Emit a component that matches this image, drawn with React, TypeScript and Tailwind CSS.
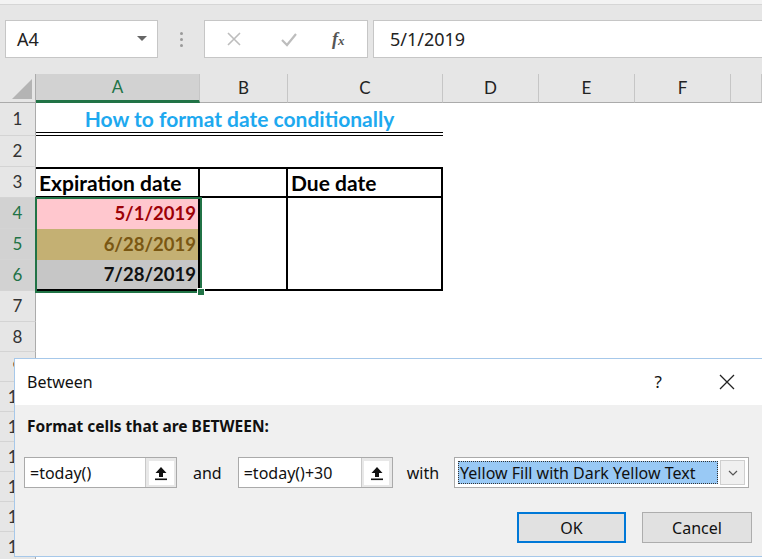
import React from 'react';

const sheetFont = { fontFamily: 'Lato, "Liberation Sans", sans-serif' };

function ColHead({ label, active }: { label: string; active?: boolean }) {
  return (
    <div
      className={`flex items-center justify-center border-r border-[#c6c6c6] text-[17px] ${
        active ? 'bg-[#d2d2d2] text-[#217346] border-b-[3px] border-b-[#217346]' : 'bg-[#e6e6e6] text-[#222] border-b border-b-[#ababab]'
      }`}
    >
      {label}
    </div>
  );
}

function RowHead({ n, active }: { n: number; active?: boolean }) {
  return (
    <div
      className={`flex items-center justify-center border-r border-b border-r-[#ababab] border-b-[#d4d4d4] text-[17px] ${
        active ? 'bg-[#d2d2d2] text-[#217346]' : 'bg-[#e6e6e6] text-[#333]'
      }`}
    >
      {n}
    </div>
  );
}

function Empty({ n }: { n: number }) {
  return (
    <>
      {Array.from({ length: n }).map((_, i) => (
        <div key={i} />
      ))}
    </>
  );
}

function RefButton() {
  return (
    <div className="w-[31px] h-full border-l border-[#c8c8c8] bg-[#e8e8e8] flex items-center justify-center">
      <div className="w-[25px] h-[24px] bg-white flex items-center justify-center">
        <svg width="14" height="16" viewBox="0 0 14 16">
          <path d="M7 2 L12.5 8 H9 V12 H5 V8 H1.5 Z" fill="#111" />
          <rect x="1" y="13.5" width="12" height="1.6" fill="#111" />
        </svg>
      </div>
    </div>
  );
}

export default function App() {
  return (
    <div className="w-[762px] h-[559px] relative overflow-hidden bg-white" style={sheetFont}>
      {/* formula bar */}
      <div className="h-[74px] bg-[#e6e6e6] border-t-[4px] border-t-[#f3f3f3] relative" style={{ fontFamily: '"Noto Sans", sans-serif' }}>
        <div className="h-px bg-[#d6d6d6]" />
        <div className="flex items-start pt-[15px]">
          <div className="ml-[5px] w-[153px] h-[38px] bg-white border border-[#c6c6c6] flex items-center pl-[11px] pr-[10px]">
            <span className="text-[18px] text-[#222]">A4</span>
            <svg className="ml-auto" width="10" height="6" viewBox="0 0 10 6">
              <path d="M0 0 H10 L5 5 Z" fill="#666" />
            </svg>
          </div>
          <div className="w-[46px] h-[38px] flex flex-col items-center justify-center gap-[3px]">
            <span className="w-[3px] h-[3px] bg-[#9a9a9a] rounded-full" />
            <span className="w-[3px] h-[3px] bg-[#9a9a9a] rounded-full" />
            <span className="w-[3px] h-[3px] bg-[#9a9a9a] rounded-full" />
          </div>
          <div className="w-[164px] h-[38px] bg-white border border-[#c6c6c6] flex items-center">
            <svg className="ml-[21px]" width="16" height="16" viewBox="0 0 16 16">
              <path d="M2 2 L14 14 M14 2 L2 14" stroke="#bdbdbd" strokeWidth="1.6" fill="none" />
            </svg>
            <svg className="ml-[38px]" width="18" height="16" viewBox="0 0 18 16">
              <path d="M2 9 L7 14 L16 3" stroke="#bdbdbd" strokeWidth="2.2" fill="none" />
            </svg>
            <span
              className="ml-[34px] text-[18px] italic font-bold text-[#555]"
              style={{ fontFamily: '"Liberation Serif", serif' }}
            >
              f<span className="text-[13px]">x</span>
            </span>
          </div>
          <div className="ml-[5px] flex-1 h-[38px] bg-white border border-[#c6c6c6] border-r-0 flex items-center pl-[16px]">
            <span className="text-[18px] text-[#222]">5/1/2019</span>
          </div>
        </div>
      </div>

      {/* sheet grid */}
      <div className="relative grid grid-cols-[36px_164px_88px_155px_96px_96px_96px_31px] grid-rows-[29px_33px_31px_31px_31px_31px_31px_31px_30px_30px_30px_30px_30px_30px_30px_30px]">
        {/* header row */}
        <div className="bg-[#e6e6e6] border-r border-b border-[#ababab] flex items-end justify-end p-[3px]">
          <svg width="20" height="20" viewBox="0 0 20 20">
            <path d="M20 0 L20 20 L0 20 Z" fill="#b4b4b4" />
          </svg>
        </div>
        <ColHead label="A" active />
        <ColHead label="B" />
        <ColHead label="C" />
        <ColHead label="D" />
        <ColHead label="E" />
        <ColHead label="F" />
        <ColHead label="" />

        {/* row 1 */}
        <RowHead n={1} />
        <div className="col-span-3 border-b-[4px] border-double border-black flex items-center justify-center pt-[3px] text-[21px] font-bold text-[#1ea9ef]">
          How to format date conditionally
        </div>
        <Empty n={4} />

        {/* row 2 */}
        <RowHead n={2} />
        <Empty n={7} />

        {/* row 3 */}
        <RowHead n={3} />
        <div className="border-y-2 border-r-2 border-black flex items-center pl-[3px] pt-[1px] text-[21px] font-bold text-black">
          Expiration date
        </div>
        <div className="border-y-2 border-r-2 border-black" />
        <div className="border-y-2 border-r-2 border-black flex items-center pl-[3px] pt-[1px] text-[21px] font-bold text-black">
          Due date
        </div>
        <Empty n={4} />

        {/* row 4 */}
        <RowHead n={4} active />
        <div className="bg-[#ffc7ce] border-r-2 border-black flex items-center justify-end pr-[2px] text-[18.5px] font-bold text-[#9c0006]">
          5/1/2019
        </div>
        <div className="row-span-3 border-r-2 border-b-2 border-black" />
        <div className="row-span-3 border-r-2 border-b-2 border-black" />
        <Empty n={4} />

        {/* row 5 */}
        <RowHead n={5} active />
        <div className="bg-[#c4b073] border-r-2 border-black flex items-center justify-end pr-[2px] text-[18.5px] font-bold text-[#7a5712]">
          6/28/2019
        </div>
        <Empty n={4} />

        {/* row 6 */}
        <RowHead n={6} active />
        <div className="bg-[#c6c6c6] border-r-2 border-b-2 border-black flex items-center justify-end pr-[2px] text-[18.5px] font-bold text-[#111]">
          7/28/2019
        </div>
        <Empty n={4} />

        {[7, 8, 9, 10, 11, 12, 13, 14, 15].map((n) => (
          <React.Fragment key={n}>
            <RowHead n={n} />
            <Empty n={7} />
          </React.Fragment>
        ))}

        {/* selection A4:A6 */}
        <div className="absolute left-[35px] top-[123px] w-[167px] h-[96px] border-2 border-[#217346] pointer-events-none" />
        <div className="absolute left-[197px] top-[214px] w-[8px] h-[8px] bg-[#217346] border border-white" />
      </div>

      {/* Between dialog */}
      <div
        className="absolute left-[14px] top-[358px] w-[760px] h-[199px] border border-[#a6c8ea] bg-[#f0f0f0] flex flex-col text-[#111]"
        style={{ fontFamily: '"Noto Sans", sans-serif' }}
      >
        <div className="h-[46px] bg-white flex items-center pl-[12px]">
          <span className="text-[16px]">Between</span>
          <span className="ml-auto text-[17px]">?</span>
          <svg className="ml-[57px] mr-[38px]" width="16" height="16" viewBox="0 0 16 16">
            <path d="M1 1 L15 15 M15 1 L1 15" stroke="#222" strokeWidth="1.3" fill="none" />
          </svg>
        </div>
        <div className="flex flex-col pl-[9px]">
          <div className="mt-[10px] pl-[3px] text-[15.5px] font-bold">Format cells that are BETWEEN:</div>
          <div className="mt-[19px] flex items-center text-[16px]">
            <div className="w-[153px] h-[31px] bg-white border border-[#aaaaaa] flex items-center">
              <span className="pl-[5px] flex-1">=today()</span>
              <RefButton />
            </div>
            <span className="ml-[16px] mr-[16px]">and</span>
            <div className="w-[155px] h-[31px] bg-white border border-[#aaaaaa] flex items-center">
              <span className="pl-[5px] flex-1">=today()+30</span>
              <RefButton />
            </div>
            <span className="ml-[14px] mr-[15px]">with</span>
            <div className="w-[295px] h-[31px] bg-white border border-[#aaaaaa] flex items-center p-[3px]">
              <div className="flex-1 h-full bg-[#99c9f5] outline-1 outline-dotted outline-[#333] -outline-offset-1 flex items-center pl-[2px] text-[16px]">
                Yellow Fill with Dark Yellow Text
              </div>
              <div className="w-[25px] h-[25px] ml-[2px] bg-[#f0f0f0] border border-[#cfcfcf] flex items-center justify-center">
                <svg width="10" height="6" viewBox="0 0 10 6">
                  <path d="M1 1 L5 5 L9 1" stroke="#555" strokeWidth="1.2" fill="none" />
                </svg>
              </div>
            </div>
          </div>
          <div className="mt-[24px] flex items-center text-[16px]">
            <div className="ml-[493px] w-[109px] h-[31px] bg-[#e1e1e1] border-2 border-[#0078d7] flex items-center justify-center">
              OK
            </div>
            <div className="ml-[16px] w-[110px] h-[31px] bg-[#e1e1e1] border border-[#adadad] flex items-center justify-center">
              Cancel
            </div>
          </div>
        </div>
      </div>
    </div>
  );
}
